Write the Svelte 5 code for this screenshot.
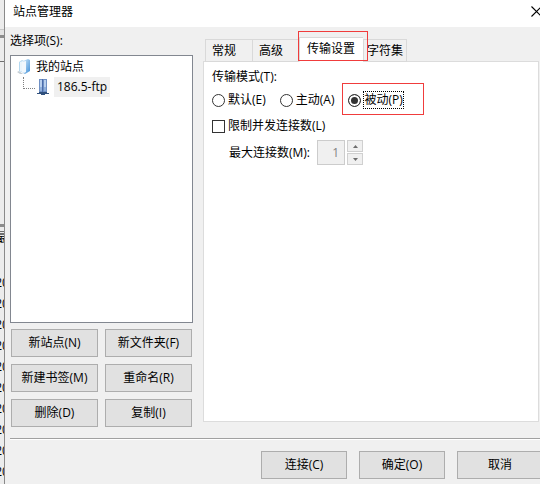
<script lang="ts">
    let mode = $state("passive")
    let limit = $state(false)
    let connections = $state(1)
    let activeTab = $state("传输设置")

    const tabs = ["常规", "高级", "传输设置", "字符集"]
    const siteActions = ["新站点(N)", "新文件夹(F)", "新建书签(M)", "重命名(R)", "删除(D)", "复制(I)"]
    const modes = [
        { value: "default", label: "默认(E)" },
        { value: "active", label: "主动(A)" },
        { value: "passive", label: "被动(P)" }
    ]
    const rows = Array(10).fill("20")
</script>

<div class="screen">
    <div class="behind" aria-hidden="true">
        <div class="toolbar"></div>
        <div class="bar"></div>
        <div class="field"></div>
        <div class="pane"></div>
        <div class="bar"></div>
        <div class="list">
            <span class="head">最</span>
            {#each rows as row}
                <span class="row">{row}</span>
            {/each}
        </div>
    </div>

    <main class="dialog">
        <header>
            <h1>站点管理器</h1>
            <button class="close" aria-label="关闭">
                <svg width="11" height="11" viewBox="0 0 11 11"><path d="M0.5 0.5L10.5 10.5M10.5 0.5L0.5 10.5" stroke="#000" stroke-width="1.1" /></svg>
            </button>
        </header>

        <div class="content">
            <section class="sites">
                <h2>选择项(S):</h2>
                <ul class="tree">
                    <li>
                        <div class="node">
                            <svg width="14" height="16" viewBox="0 0 14 16">
                                <defs>
                                    <linearGradient id="cover" x1="0" y1="0" x2="1" y2="1">
                                        <stop offset="0" stop-color="#d4ebfa" />
                                        <stop offset="1" stop-color="#3f8fd8" />
                                    </linearGradient>
                                </defs>
                                <path d="M0 13L2 12L6 15L3 15Z" fill="#c4cdd4" />
                                <path d="M2 3L5 1L7 2V14L2 12Z" fill="#b4d8f0" />
                                <path d="M3 3L6 2V13L3 12Z" fill="#eaf5fc" />
                                <path d="M6 2L11 0L13 1V12L8 15L6 14Z" fill="url(#cover)" />
                                <path d="M5 3L9 2V13L7 14L5 13Z" fill="#f1f8fd" />
                            </svg>
                            <span>我的站点</span>
                        </div>
                        <ul>
                            <li class="node child">
                                <svg width="12" height="16" viewBox="0 0 12 16">
                                    <path d="M2 0H10V13H2Z" fill="#6f90c4" />
                                    <path d="M3 1H5V8H3ZM7 1H9V8H7Z" fill="#b9d0ee" />
                                    <path d="M3 8H5V12H3ZM7 8H9V12H7Z" fill="#90b0dc" />
                                    <path d="M5 0H6V13H5Z" fill="#4a6cab" />
                                    <path d="M0 14H12V15H0ZM2 13H10V14H2ZM4 15H8V16H4Z" fill="#30507c" />
                                </svg>
                                <span class="selected">186.5-ftp</span>
                            </li>
                        </ul>
                    </li>
                </ul>
                <div class="actions">
                    {#each siteActions as action}
                        <button class="btn">{action}</button>
                    {/each}
                </div>
            </section>

            <section class="settings">
                <div class="tabs" role="tablist">
                    {#each tabs as tab}
                        <button
                            class="tab"
                            class:current={tab === activeTab}
                            role="tab"
                            aria-selected={tab === activeTab}
                            onclick={() => activeTab = tab}
                        >{tab}</button>
                    {/each}
                </div>
                <div class="panel" role="tabpanel">
                    <fieldset>
                        <legend>传输模式(T):</legend>
                        <div class="modes">
                            {#each modes as item}
                                <label class="choice" class:marked={item.value === "passive"}>
                                    <input type="radio" name="mode" value={item.value} bind:group={mode} />
                                    <span>{item.label}</span>
                                </label>
                            {/each}
                        </div>
                    </fieldset>
                    <label class="choice limit">
                        <input type="checkbox" bind:checked={limit} />
                        <span>限制并发连接数(L)</span>
                    </label>
                    <div class="max">
                        <label for="max">最大连接数(M):</label>
                        <input id="max" type="text" bind:value={connections} disabled={!limit} />
                        <div class="spin">
                            <button disabled={!limit} aria-label="增加" onclick={() => connections++}>
                                <svg width="5" height="3" viewBox="0 0 5 3"><path d="M0 3L2.5 0L5 3Z" fill="#6d6d6d" /></svg>
                            </button>
                            <button disabled={!limit} aria-label="减少" onclick={() => connections--}>
                                <svg width="5" height="3" viewBox="0 0 5 3"><path d="M0 0L2.5 3L5 0Z" fill="#6d6d6d" /></svg>
                            </button>
                        </div>
                    </div>
                </div>
            </section>
        </div>

        <footer>
            <button class="btn">连接(C)</button>
            <button class="btn">确定(O)</button>
            <button class="btn">取消</button>
        </footer>
    </main>
</div>

<style>
    :global(body) {
        overflow: hidden;
    }

    .screen {
        display: flex;
        min-height: 100vh;
        overflow: hidden;
        background: #f0f0f0;
        color: #000;
        font: 12px/16px "Open Sans", "Noto Sans CJK SC", sans-serif;
    }

    .screen * {
        box-sizing: border-box;
    }

    button, input {
        font: inherit;
        color: inherit;
        margin: 0;
    }

    h1, h2 {
        margin: 0;
        font-size: 12px;
        font-weight: 400;
    }

    ul {
        list-style: none;
        margin: 0;
        padding: 0;
    }

    /* the main window, which shows as a strip beside the dialog */
    .behind {
        flex: none;
        width: 4px;
        overflow: hidden;
        background: #ececec;
    }

    .toolbar {
        height: 35px;
        background: linear-gradient(#ececec 29px, #c8c8c8 29px, #c8c8c8 30px, #e4e4e4 30px);
    }

    .bar {
        height: 3px;
        background: #8c8c8c;
    }

    .field {
        height: 24px;
        border-bottom: 1px solid #6e6e6e;
    }

    .pane {
        height: 162px;
    }

    .list {
        display: flex;
        flex-direction: column;
        align-items: center;
    }

    .head, .row {
        flex: none;
        height: 21px;
        line-height: 21px;
    }

    .head {
        margin-bottom: 24px;
    }

    .dialog {
        flex: 1;
        min-width: 0;
        display: flex;
        flex-direction: column;
        border-left: 1px solid #8a8a8a;
    }

    header {
        display: flex;
        justify-content: space-between;
        align-items: center;
        height: 27px;
        padding: 0 0 4px 8px;
        background: #fff;
    }

    .close {
        display: flex;
        flex: none;
        margin-right: -2px;
        padding: 0;
        border: 0;
        background: none;
    }

    .content {
        flex: 1;
        display: flex;
        gap: 10px;
        padding: 6px 1px 11px 5px;
    }

    .sites {
        flex: none;
        width: 183px;
        display: flex;
        flex-direction: column;
    }

    .tree {
        flex: 1;
        margin-top: 6px;
        padding: 1px 6px;
        border: 1px solid #828790;
        background: #fff;
    }

    .node {
        display: flex;
        align-items: center;
        gap: 5px;
        height: 20px;
    }

    .child {
        margin-left: 6px;
    }

    .child::before {
        content: "";
        align-self: flex-start;
        width: 11px;
        height: 11px;
        margin-right: -3px;
        border: dotted #808080;
        border-width: 0 0 1px 1px;
    }

    .selected {
        padding: 2px 3px;
        background: #f0f0f0;
    }

    .btn {
        height: 28px;
        padding: 0;
        border: 1px solid #adadad;
        background: #e1e1e1;
    }

    .actions {
        display: grid;
        grid-template-columns: 1fr 1fr;
        gap: 7px;
        padding: 6px 1px 0;
    }

    .settings {
        flex: 1;
        min-width: 0;
        display: flex;
        flex-direction: column;
        padding: 4px 0 5px;
    }

    .tabs {
        position: relative;
        z-index: 1;
        display: flex;
        align-items: flex-end;
        height: 25px;
        padding-left: 2px;
        margin-bottom: -1px;
    }

    .tab {
        height: 23px;
        padding: 0 16px 0 6px;
        border: 1px solid #d9d9d9;
        border-right-width: 0;
        background: #f0f0f0;
    }

    .tab:last-child {
        padding: 0 3px;
        border-right-width: 1px;
    }

    .current {
        position: relative;
        height: 25px;
        padding: 0 8px 2px 7px;
        border-bottom-color: #fff;
        background: #fff;
    }

    .current::after, .marked::after {
        content: "";
        position: absolute;
        border: 1px solid #f03c3c;
        pointer-events: none;
    }

    .current::after {
        inset: -7px -5px 0 -2px;
    }

    .panel {
        flex: 1;
        padding: 7px 8px;
        border: 1px solid #dcdcdc;
        background: #fff;
    }

    fieldset {
        margin: 0;
        padding: 0;
        border: 0;
        min-width: 0;
    }

    legend {
        padding: 0;
    }

    .modes {
        display: flex;
        gap: 14px;
        padding-top: 6px;
    }

    .choice {
        position: relative;
        display: flex;
        align-items: center;
        gap: 3px;
        height: 18px;
    }

    .marked::after {
        inset: -8px -21px -6px -6px;
    }

    .marked span {
        outline: 1px dotted #000;
    }

    .choice input {
        appearance: none;
        flex: none;
        width: 13px;
        height: 13px;
        border: 1px solid #333;
        background: #fff;
    }

    .choice input[type="radio"] {
        border-radius: 50%;
    }

    .choice input:checked {
        background: #333;
        box-shadow: inset 0 0 0 2px #fff;
    }

    .limit {
        margin-top: 8px;
    }

    .max {
        display: flex;
        align-items: center;
        margin: 5px 0 0 17px;
    }

    .max input {
        width: 28px;
        height: 25px;
        margin: 0 2px 0 7px;
        padding: 0 5px;
        border: 1px solid #ccc;
        background: #f0f0f0;
        color: #838383;
        text-align: right;
    }

    .spin {
        display: flex;
        flex-direction: column;
        gap: 1px;
    }

    .spin button {
        display: flex;
        align-items: center;
        justify-content: center;
        width: 16px;
        height: 12px;
        padding: 0;
        border: 1px solid #d0d0d0;
        background: #f0f0f0;
    }

    footer {
        display: flex;
        justify-content: flex-end;
        gap: 12px;
        margin-left: 5px;
        padding: 12px 0 5px;
        border-top: 1px solid #a0a0a0;
        box-shadow: inset 0 1px #fff;
    }

    footer .btn {
        width: 86px;
    }

    footer .btn:last-child {
        margin-right: -3px;
    }
</style>
